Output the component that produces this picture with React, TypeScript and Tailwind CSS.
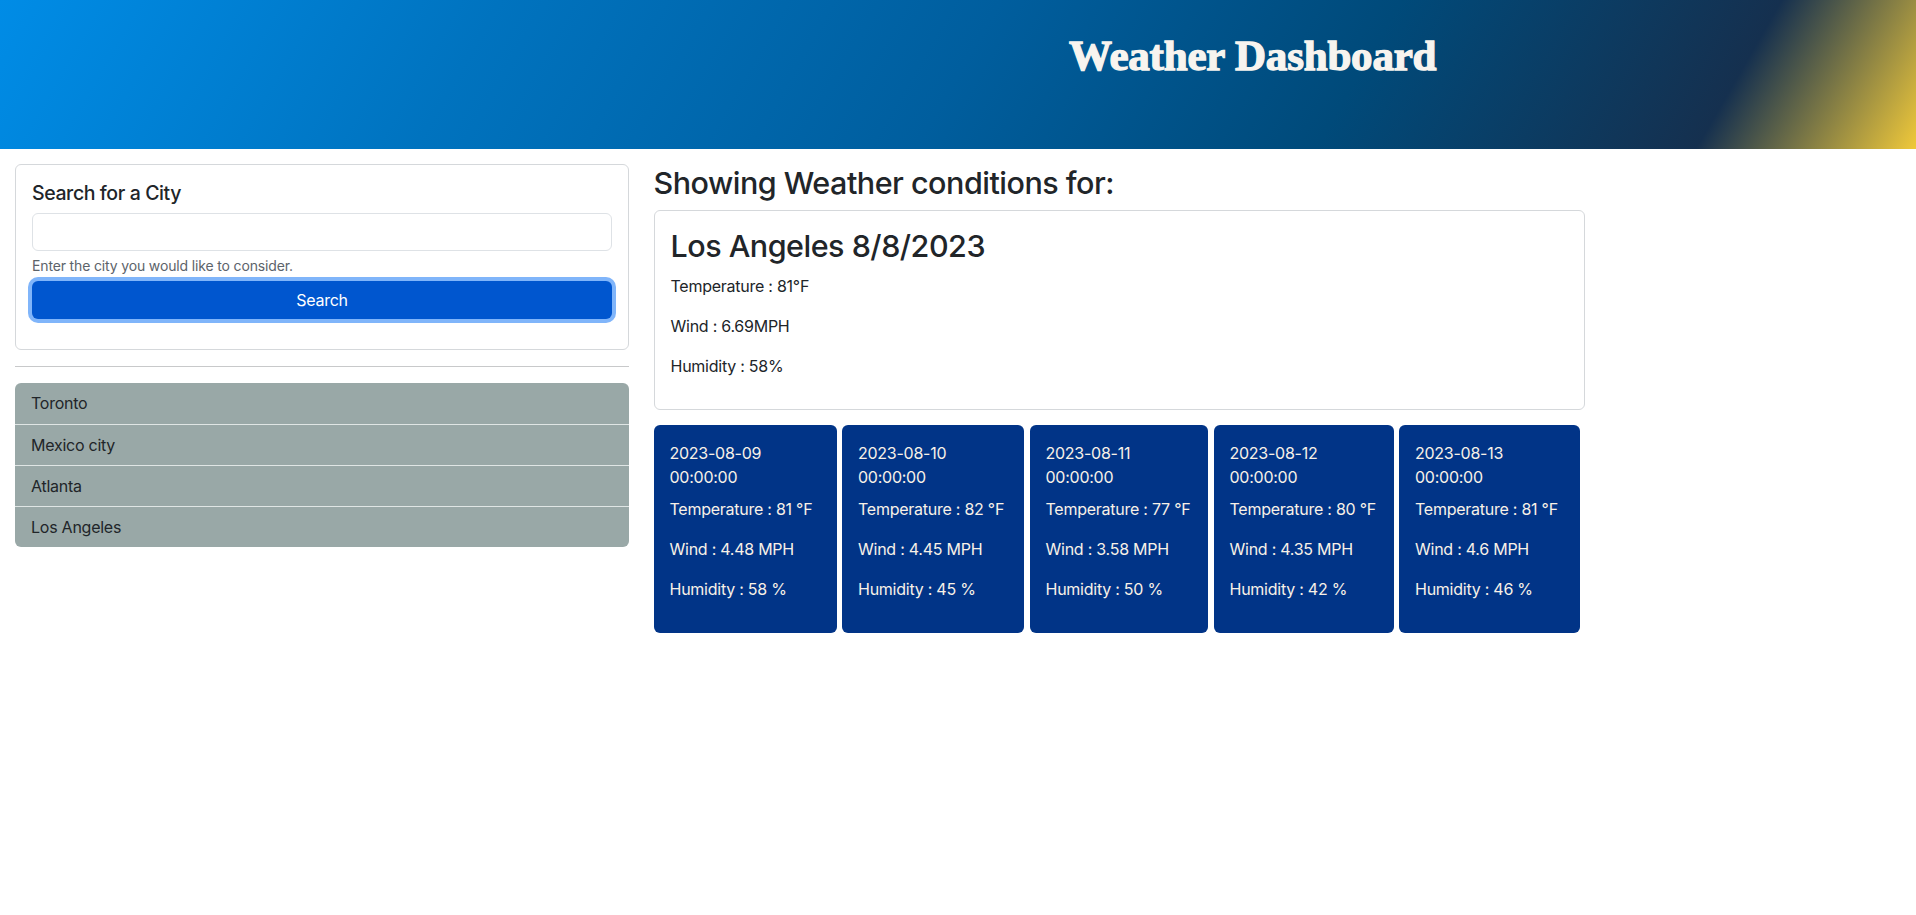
import * as React from "react";

const cities = ["Toronto", "Mexico city", "Atlanta", "Los Angeles"];

const forecast = [
  { date: "2023-08-09", temp: 81, wind: "4.48", humidity: 58, width: "w-[183px]" },
  { date: "2023-08-10", temp: 82, wind: "4.45", humidity: 45, width: "w-[182px]" },
  { date: "2023-08-11", temp: 77, wind: "3.58", humidity: 50, width: "w-[178.5px]" },
  { date: "2023-08-12", temp: 80, wind: "4.35", humidity: 42, width: "w-[180px]" },
  { date: "2023-08-13", temp: 81, wind: "4.6", humidity: 46, width: "w-[181px]" },
];

function Header() {
  return (
    <header className="h-[149px] bg-[linear-gradient(120deg,#008ce6_0%,#0073bf_25%,#005e9e_50%,#004a7a_70%,#15304f_89%,#f0c93a_100%)]">
      <h1 className="ml-[1069px] pt-[34px] font-['Liberation_Serif',serif] text-[43px] font-bold leading-none tracking-[-0.2px] text-[#f7f4ef] [-webkit-text-stroke:1.3px_#f7f4ef]">
        Weather Dashboard
      </h1>
    </header>
  );
}

function SearchPanel() {
  return (
    <aside className="w-[614px] shrink-0">
      <div className="rounded-md border border-[#d5d8db] p-4">
        <h5 className="mb-2 text-[19.5px] font-medium leading-[24px] tracking-[-0.4px] text-[#212529]">Search for a City</h5>
        <input
          type="text"
          className="block h-[38px] w-full rounded-md border border-[#dee2e6] px-3 outline-none"
        />
        <div className="mt-1 text-[14px] leading-[21px] tracking-[-0.15px] text-[#5c636a]">
          Enter the city you would like to consider.
        </div>
        <button className="mb-[14px] mt-[5px] h-[38px] w-full rounded-md bg-[#0056cf] text-[16px] text-white ring-4 ring-[#80b5fa]">
          Search
        </button>
      </div>
      <hr className="my-4 border-t border-[#c8c9ca]" />
      <ul className="overflow-hidden rounded-md bg-[#99a8a7]">
        {cities.map((city, i) => (
          <li
            key={city}
            className={
              i === 0
                ? "h-[41px] px-4 leading-[41px] text-[#212529]"
                : "h-[41px] border-t border-[#dfe5e4] px-4 leading-[40px] text-[#212529]"
            }
          >
            {city}
          </li>
        ))}
      </ul>
    </aside>
  );
}

function CurrentWeather() {
  return (
    <div className="rounded-md border border-[#d5d8db] px-4 pb-[15px] pt-4">
      <h2 className="mb-2 text-[30.5px] font-medium leading-[38.4px] tracking-[-0.5px] text-[#212529]">
        Los Angeles 8/8/2023
      </h2>
      <p className="mb-4 leading-6">Temperature : 81°F</p>
      <p className="mb-4 leading-6">Wind : 6.69MPH</p>
      <p className="mb-4 leading-6">Humidity : 58%</p>
    </div>
  );
}

function ForecastRow() {
  return (
    <div className="mt-[15px] flex gap-[5.5px]">
      {forecast.map((day) => (
        <div
          key={day.date}
          className={`${day.width} whitespace-nowrap rounded-md bg-[#013487] p-4 text-[#f8f1e7]`}
        >
          <div className="mb-2 leading-6">
            {day.date}
            <br />
            00:00:00
          </div>
          <p className="mb-4 leading-6">Temperature : {day.temp} °F</p>
          <p className="mb-4 leading-6">Wind : {day.wind} MPH</p>
          <p className="mb-4 leading-6">Humidity : {day.humidity} %</p>
        </div>
      ))}
    </div>
  );
}

export default function App() {
  return (
    <div className="min-h-[915px] bg-white font-['Inter',sans-serif] text-[16px] tracking-[-0.25px] text-[#212529]">
      <Header />
      <div className="mt-[15px] flex gap-[24.5px] px-[15px]">
        <SearchPanel />
        <main className="w-[931.5px]">
          <h2 className="mb-2 text-[30.5px] font-medium leading-[38.4px] tracking-[-0.5px] text-[#212529]">
            Showing Weather conditions for:
          </h2>
          <CurrentWeather />
          <ForecastRow />
        </main>
      </div>
    </div>
  );
}
